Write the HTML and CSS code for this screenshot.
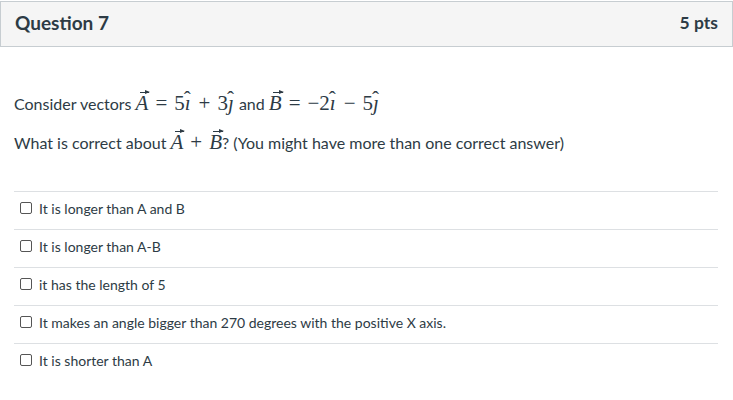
FILE: index.html
```html
<!DOCTYPE html>
<html>
<head>
<meta charset="utf-8">
<link rel="stylesheet" href="styles.css">
</head>
<body>
<div class="question">
  <div class="header">
    <span class="title">Question 7</span>
    <span class="pts">5 pts</span>
  </div>
  <div class="content">
    <p class="text">Consider vectors <span class="m"><span class="vec">A</span><span class="op">=</span>5<span class="hat">ı</span><span class="op">+</span>3<span class="hat">ȷ</span></span> and <span class="m"><span class="vec">B</span><span class="op">=</span>−2<span class="hat">ı</span><span class="op">−</span>5<span class="hat">ȷ</span></span></p>
    <p class="text">What is correct about <span class="m"><span class="vec">A</span><span class="op">+</span><span class="vec">B</span></span>? (You might have more than one correct answer)</p>
    <div class="answers">
      <div class="answer"><span class="box"></span><span>It is longer than A and B</span></div>
      <div class="answer"><span class="box"></span><span>It is longer than A-B</span></div>
      <div class="answer"><span class="box"></span><span>it has the length of 5</span></div>
      <div class="answer"><span class="box"></span><span>It makes an angle bigger than 270 degrees with the positive X axis.</span></div>
      <div class="answer"><span class="box"></span><span>It is shorter than A</span></div>
    </div>
  </div>
</div>
</body>
</html>
```

FILE: styles.css
```css
html, body {
  margin: 0;
  padding: 0;
  background: #fff;
}
body {
  font-family: Lato, "Liberation Sans", sans-serif;
  color: #2d3b45;
  padding-top: 1px;
}
.question {
  width: 733px;
}
.header {
  box-sizing: border-box;
  height: 46px;
  background: #f5f5f5;
  border: 1px solid #c7cdd1;
  display: flex;
  align-items: center;
  justify-content: space-between;
  padding: 0 14px 4px 14px;
}
.title {
  font-weight: bold;
  font-size: 19px;
}
.pts {
  font-weight: bold;
  font-size: 17.5px;
  color: #2d3b45;
}
.content {
  padding: 0 15px 0 14px;
}
.text {
  margin: 0;
  font-size: 16px;
  line-height: 24px;
}
.text:first-child {
  margin-top: 45px;
}
.text + .text {
  margin-top: 15px;
}
.m {
  font-family: "Liberation Serif", "DejaVu Serif", serif;
  font-size: 21px;
  line-height: 1;
}
.op {
  font-style: normal;
  display: inline-block;
  margin: 0 7px;
}
.vec {
  font-style: italic;
  position: relative;
  display: inline-block;
}
.vec::before {
  content: "";
  position: absolute;
  left: 4px;
  right: -1px;
  top: -1px;
  height: 1px;
  background: #2d3b45;
}
.vec::after {
  content: "";
  position: absolute;
  right: -2px;
  top: -3px;
  border-left: 5px solid #2d3b45;
  border-top: 2.5px solid transparent;
  border-bottom: 2.5px solid transparent;
}
.hat {
  font-style: italic;
  position: relative;
  display: inline-block;
  padding-right: 1px;
}
.hat::after {
  content: "ˆ";
  font-style: normal;
  font-size: 21px;
  position: absolute;
  left: -2px;
  right: 0;
  text-align: center;
  top: -4px;
}
.answers {
  margin-top: 36px;
}
.answer {
  box-sizing: border-box;
  display: flex;
  align-items: center;
  height: 38px;
  padding-bottom: 5px;
  border-top: 1px solid #dde0e3;
  font-size: 14px;
  padding-left: 6px;
}
.box {
  box-sizing: border-box;
  width: 12px;
  height: 12px;
  border: 1px solid #555;
  border-radius: 2px;
  margin-right: 7px;
  background: #fff;
}
```
